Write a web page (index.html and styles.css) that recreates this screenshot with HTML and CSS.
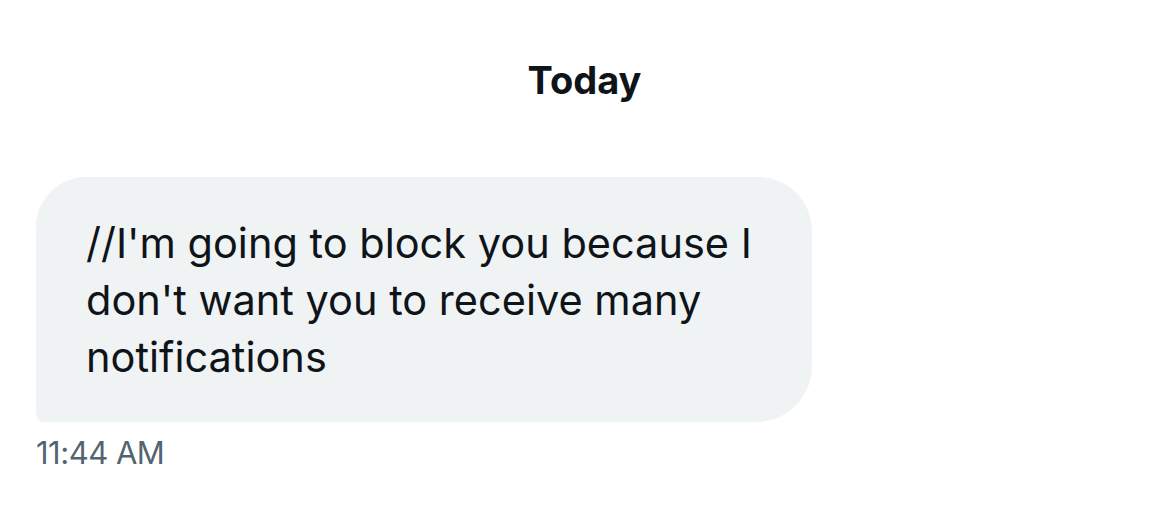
FILE: index.html
```html
<!DOCTYPE html>
<html lang="en">
<head>
  <meta charset="UTF-8" />
  <meta name="viewport" content="width=device-width, initial-scale=1" />
  <title>Messages</title>
  <link rel="stylesheet" href="styles.css">
</head>
<body>

  <div class="conversation">
    <div class="day">Today</div>

    <div class="message">
      <div class="bubble">//I'm going to block you because I don't want you to receive many notifications</div>
      <div class="time">11:44 AM</div>
    </div>
  </div>

</body>
</html>
```

FILE: styles.css
```css
/* Page */
body {
  margin: 0;
  background: #fff;
  font-family: Inter, "Noto Sans", sans-serif;
  color: #0f1419;
}

.conversation {
  padding: 56px 36px 0;
}

/* Day divider */
.day {
  text-align: center;
  font-size: 38px;
  font-weight: 700;
  line-height: 48px;
}

.message {
  margin-top: 73px;
}

/* Message bubble */
.bubble {
  box-sizing: border-box;
  width: 776px;
  height: 245px;
  padding: 38px 50px 0;
  background: #eff3f4;
  border-radius: 50px 54px 56px 8px;
  font-size: 41.5px;
  line-height: 57px;
}

.time {
  margin-top: 13px;
  font-size: 31px;
  line-height: 36px;
  letter-spacing: -0.5px;
  color: #536471;
}
```
